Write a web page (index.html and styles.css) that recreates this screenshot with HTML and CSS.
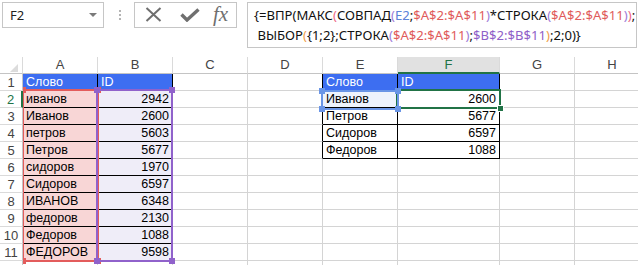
FILE: index.html
```html
<!DOCTYPE html>
<html>
<head>
<meta charset="utf-8">
<link rel="stylesheet" href="styles.css">
</head>
<body>
<div class="app">
  <div class="bar">
    <div class="namebox"><span>F2</span><span class="caret"></span></div>
    <div class="grip"><i></i><i></i><i></i></div>
    <div class="btns">
      <svg class="ic-x" width="17" height="15" viewBox="0 0 17 15"><path d="M1.5 1L15.5 14M15.5 1L1.5 14" stroke="#6f6f6f" stroke-width="2" fill="none"/></svg>
      <svg class="ic-ok" width="20" height="14" viewBox="0 0 20 14"><path d="M1.5 6.5L7 12L18.5 1.5" stroke="#6f6f6f" stroke-width="3.4" fill="none"/></svg>
      <span class="fx">fx</span>
    </div>
    <div class="formula"><div class="fl">{=ВПР(МАКС<span class="pp">(</span>СОВПАД<span class="pv">(</span><span class="rb">E2</span>;<span class="rr">$A$2:$A$11</span><span class="pv">)</span>*СТРОКА<span class="pv">(</span><span class="rr">$A$2:$A$11</span><span class="pv">)</span><span class="pp">)</span>;</div><div class="fl"> ВЫБОР<span class="po">(</span>{1;2};СТРОКА<span class="pv">(</span><span class="rr">$A$2:$A$11</span><span class="pv">)</span>;<span class="rv">$B$2:$B$11</span><span class="po">)</span>;2;0)}</div></div>
  </div>
  <div class="sheet">
    <div class="ch corner"><span class="tri"></span></div><div class="ch">A</div><div class="ch">B</div><div class="ch">C</div><div class="ch">D</div><div class="ch">E</div><div class="ch csel">F</div><div class="ch">G</div><div class="ch">H</div>

    <div class="rh">1</div><div class="c hd bk">Слово</div><div class="c hd bk">ID</div><div class="c"></div><div class="c bkr"></div><div class="c hd bk">Слово</div><div class="c hd bk">ID</div><div class="c"></div><div class="c"></div>
    <div class="rh rsel">2</div><div class="c pk bk">иванов</div><div class="c lv bk n">2942</div><div class="c"></div><div class="c bkr"></div><div class="c lb bk">Иванов</div><div class="c bk n">2600</div><div class="c"></div><div class="c"></div>
    <div class="rh">3</div><div class="c pk bk">Иванов</div><div class="c lv bk n">2600</div><div class="c"></div><div class="c bkr"></div><div class="c bk">Петров</div><div class="c bk n">5677</div><div class="c"></div><div class="c"></div>
    <div class="rh">4</div><div class="c pk bk">петров</div><div class="c lv bk n">5603</div><div class="c"></div><div class="c bkr"></div><div class="c bk">Сидоров</div><div class="c bk n">6597</div><div class="c"></div><div class="c"></div>
    <div class="rh">5</div><div class="c pk bk">Петров</div><div class="c lv bk n">5677</div><div class="c"></div><div class="c bkr"></div><div class="c bk">Федоров</div><div class="c bk n">1088</div><div class="c"></div><div class="c"></div>
    <div class="rh">6</div><div class="c pk bk">сидоров</div><div class="c lv bk n">1970</div><div class="c"></div><div class="c"></div><div class="c"></div><div class="c"></div><div class="c"></div><div class="c"></div>
    <div class="rh">7</div><div class="c pk bk">Сидоров</div><div class="c lv bk n">6597</div><div class="c"></div><div class="c"></div><div class="c"></div><div class="c"></div><div class="c"></div><div class="c"></div>
    <div class="rh">8</div><div class="c pk bk">ИВАНОВ</div><div class="c lv bk n">6348</div><div class="c"></div><div class="c"></div><div class="c"></div><div class="c"></div><div class="c"></div><div class="c"></div>
    <div class="rh">9</div><div class="c pk bk">федоров</div><div class="c lv bk n">2130</div><div class="c"></div><div class="c"></div><div class="c"></div><div class="c"></div><div class="c"></div><div class="c"></div>
    <div class="rh">10</div><div class="c pk bk">Федоров</div><div class="c lv bk n">1088</div><div class="c"></div><div class="c"></div><div class="c"></div><div class="c"></div><div class="c"></div><div class="c"></div>
    <div class="rh">11</div><div class="c pk bk">ФЕДОРОВ</div><div class="c lv bk n">9598</div><div class="c"></div><div class="c"></div><div class="c"></div><div class="c"></div><div class="c"></div><div class="c"></div>
    <div class="rh"></div><div class="c"></div><div class="c"></div><div class="c"></div><div class="c"></div><div class="c"></div><div class="c"></div><div class="c"></div><div class="c"></div>

    <div class="rng rng-a"><i class="h tl"></i><i class="h tr"></i><i class="h bl"></i><i class="h br"></i></div>
    <div class="rng rng-b"><i class="h tl"></i><i class="h tr"></i><i class="h bl"></i><i class="h br"></i></div>
    <div class="sel-f2"><i class="fill"></i></div>
    <div class="rng rng-e"><i class="h tl"></i><i class="h tr"></i><i class="h bl"></i><i class="h br"></i></div>
  </div>
</div>
</body>
</html>
```
FILE: styles.css
```css
* { box-sizing: border-box; }
html, body { margin: 0; padding: 0; background: #fff; }
body { width: 638px; height: 265px; overflow: hidden; font-family: "Liberation Sans", Arial, sans-serif; }
.app { width: 638px; height: 265px; overflow: hidden; }

.bar { display: flex; align-items: flex-start; padding: 2px 1px 0 2px; height: 57px; }
.namebox { width: 102px; height: 26px; flex: none; border: 1px solid #c6c6c6; display: flex; align-items: center; justify-content: space-between; padding: 0 6px 0 7px; font-family: "Noto Sans", sans-serif; font-size: 13px; color: #222; }
.caret { width: 0; height: 0; border-left: 4px solid transparent; border-right: 4px solid transparent; border-top: 4px solid #7a7a7a; }
.grip { width: 30px; height: 26px; flex: none; display: flex; flex-direction: column; align-items: center; justify-content: center; gap: 2.3px; padding-left: 1px; }
.grip i { display: block; width: 2px; height: 2px; background: #b4b4b4; }
.btns { width: 103px; height: 26px; flex: none; border: 1px solid #c6c6c6; display: flex; align-items: center; padding-left: 10px; }
.ic-x { display: block; margin-top: -1px; }
.ic-ok { display: block; margin-left: 18px; }
.fx { margin-left: 13px; font-family: "Liberation Serif", serif; font-style: italic; font-size: 21px; color: #6f6f6f; line-height: 20px; margin-top: -2px; }
.formula { flex: 1; height: 46px; margin-left: 10px; border: 1px solid #c6c6c6; padding: 2px 0 0 6px; font-family: "Noto Sans", sans-serif; font-size: 13.1px; line-height: 20px; color: #111; overflow: hidden; }
.fl { white-space: pre; }
.pp { color: #ee6a86; }
.pv { color: #a07cd8; }
.po { color: #f0a04c; }
.rb { color: #5b82d8; }
.rr { color: #e05b5b; }
.rv { color: #8f5fc8; }

.sheet { position: relative; display: grid; grid-template-columns: 23px 75px 75px 75px 75px 75px 102px 75px 75px; grid-auto-rows: 17px; width: 652px; }
.ch { border-right: 1px solid #dadada; border-bottom: 1px solid #c4c4c4; text-align: center; font-size: 13px; line-height: 16px; color: #444; }
.corner { display: flex; justify-content: flex-end; align-items: flex-end; padding: 0 4px 1px 0; }
.tri { width: 0; height: 0; border-left: 8px solid transparent; border-bottom: 8px solid #dcdcdc; }
.csel { background: #e1e1e1; color: #217346; border-bottom: 2px solid #217346; }
.rh { border-right: 1px solid #c4c4c4; border-bottom: 1px solid #dadada; text-align: center; font-size: 13px; line-height: 17px; color: #444; }
.rsel { color: #217346; border-right: 2px solid #217346; }
.c { border-right: 1px solid #d4d4d4; border-bottom: 1px solid #d4d4d4; font-size: 12.5px; line-height: 17px; padding: 0 3px; white-space: nowrap; color: #000; }
.n { text-align: right; }
.hd { background: #3d6ef1; color: #fff; }
.pk { background: #f8d6d6; }
.lv { background: #efedf8; }
.lb { background: #eef3fc; }
.bk { border-right-color: #000; border-bottom-color: #000; }
.bkr { border-right-color: #000; }

.rng { position: absolute; border: 2px solid; }
.rng .h { position: absolute; width: 6px; height: 6px; background: currentColor; }
.rng .tl { left: -4px; top: -4px; }
.rng .tr { right: -4px; top: -4px; }
.rng .bl { left: -4px; bottom: -4px; }
.rng .br { right: -4px; bottom: -4px; }
.rng-a { left: 23px; top: 32px; width: 76px; height: 173px; color: #e35c5c; border-color: #e35c5c; border-left-width: 1px; }
.rng-a .tl, .rng-a .bl { left: -1px; width: 3px; }
.rng-b { left: 96px; top: 32px; width: 77px; height: 173px; color: #9062cb; border-color: #9062cb; }
.rng-e { left: 321px; top: 33px; width: 78px; height: 20px; color: #6a95e6; border-color: #6a95e6; }
.sel-f2 { position: absolute; left: 396px; top: 32px; width: 105px; height: 20px; border: 2px solid #217346; }
.sel-f2 .fill { position: absolute; right: -5px; bottom: -5px; width: 7px; height: 7px; background: #217346; border: 1px solid #fff; }
```
